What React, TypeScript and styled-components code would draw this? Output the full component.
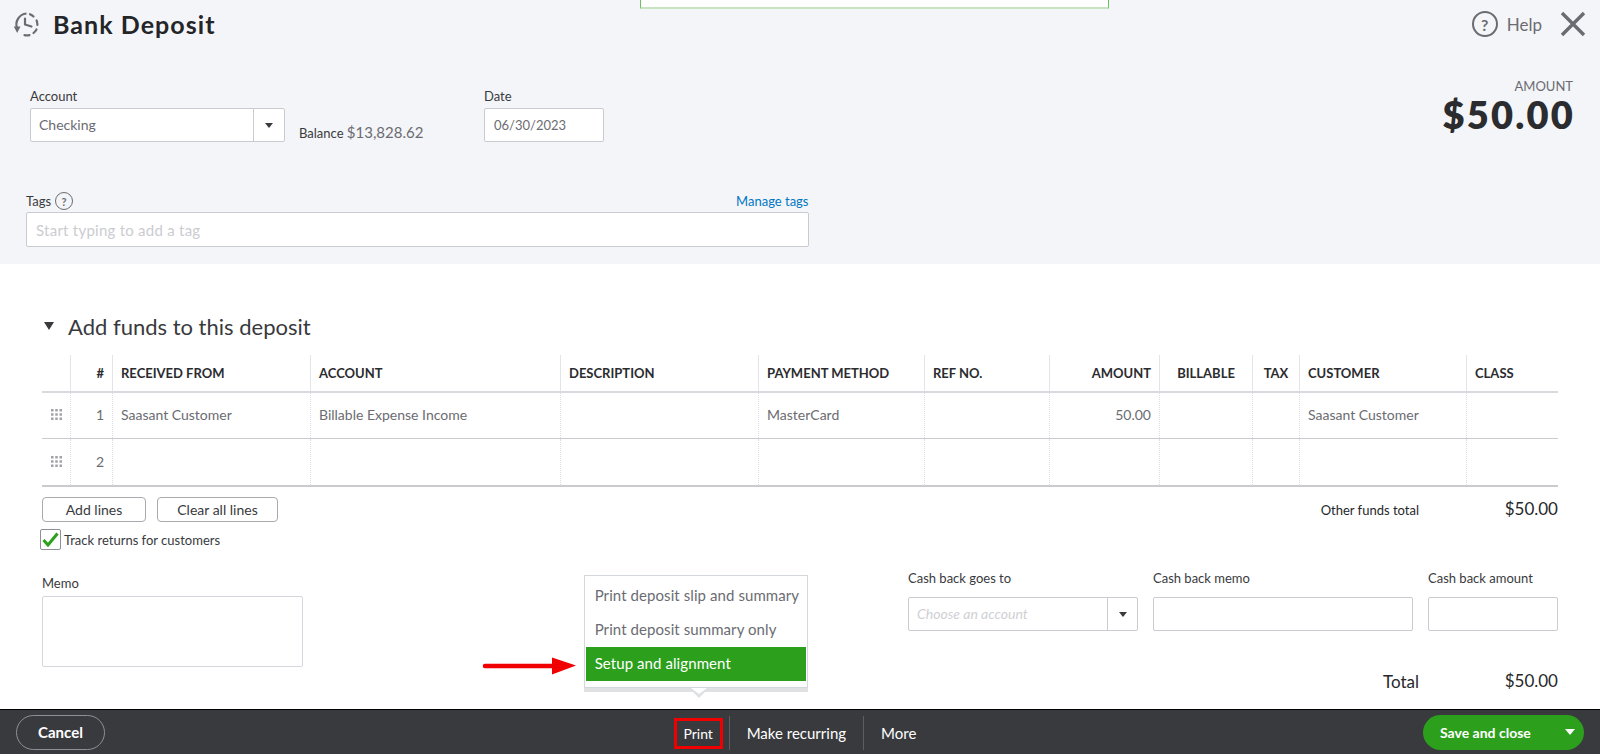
import React from 'react';
import styled, { createGlobalStyle } from 'styled-components';

const FONT = `Lato, "Open Sans", Arial, sans-serif`;
const COLUMNS = '28px 42px 198px 250px 198px 166px 125px 110px 93px 47px 167px 92px';

const GlobalStyle = createGlobalStyle`
  html, body {
    margin: 0;
    padding: 0;
    background: #fff;
  }
  * {
    box-sizing: border-box;
  }
`;

const Page = styled.div`
  position: relative;
  display: flex;
  flex-direction: column;
  width: 1600px;
  height: 754px;
  overflow: hidden;
  font-family: ${FONT};
  color: #393a3d;
`;

/* top grey panel */
const HeaderPanel = styled.section`
  height: 264px;
  flex: none;
  background: #f4f5f8;
  padding: 11px 14px 0 13px;
`;

const NoticeEdge = styled.div`
  position: absolute;
  top: 0;
  left: 640px;
  width: 469px;
  height: 9px;
  background: #fff;
  border: 1px solid #6cbf5f;
  border-top: 0;
  border-bottom: 2px solid #c6e4bf;
`;

const TitleBar = styled.div`
  display: flex;
  align-items: center;
  height: 26px;
`;

const Title = styled.h1`
  margin: 0 0 0 13px;
  font-size: 25px;
  font-weight: 700;
  letter-spacing: 1.05px;
  color: #242528;
`;

const TitleActions = styled.div`
  margin-left: auto;
  display: flex;
  align-items: center;
`;

const HelpLink = styled.span`
  margin: 0 18px 0 9px;
  font-size: 17px;
  color: #6b6c72;
`;

const HelpRound = styled.span<{ $small?: boolean }>`
  display: inline-flex;
  align-items: center;
  justify-content: center;
  width: ${(p) => (p.$small ? 18 : 26)}px;
  height: ${(p) => (p.$small ? 18 : 26)}px;
  border: ${(p) => (p.$small ? 1.5 : 2.5)}px solid #6b6c72;
  border-radius: 50%;
  font-size: ${(p) => (p.$small ? 11 : 16)}px;
  font-weight: 700;
  color: #6b6c72;
`;

const FormRow = styled.div`
  display: flex;
  align-items: flex-start;
  margin: 51px 0 0 17px;
`;

const Field = styled.div<{ $width: number; $gap?: number }>`
  width: ${(p) => p.$width}px;
  margin-left: ${(p) => p.$gap ?? 0}px;
  flex: none;
`;

const Label = styled.label<{ $gap?: number }>`
  display: block;
  height: 16px;
  line-height: 16px;
  margin-bottom: ${(p) => p.$gap ?? 4}px;
  font-size: 13px;
  color: #393a3d;
`;

const Input = styled.div<{ $size?: number; $height?: number }>`
  display: flex;
  align-items: center;
  height: ${(p) => p.$height ?? 34}px;
  padding: 0 9px;
  background: #fff;
  border: 1px solid #c9cbd0;
  border-radius: 2px;
  font-size: ${(p) => p.$size ?? 14}px;
  color: #6b6c72;
`;

const SelectBox = styled.div`
  display: flex;
  height: 34px;
  background: #fff;
  border: 1px solid #c9cbd0;
  border-radius: 2px;
  font-size: 14px;
  color: #6b6c72;
`;

const SelectValue = styled.span<{ $placeholder?: boolean }>`
  flex: 1;
  align-self: center;
  padding-left: 8px;
  padding-bottom: 1px;
  font-style: ${(p) => (p.$placeholder ? 'italic' : 'normal')};
  color: ${(p) => (p.$placeholder ? '#cfd0d4' : '#6b6c72')};
`;

const SelectCaret = styled.span<{ $width: number }>`
  width: ${(p) => p.$width}px;
  display: flex;
  align-items: center;
  justify-content: center;
  border-left: 1px solid #c9cbd0;
  &::after {
    content: '';
    border: 4.5px solid transparent;
    border-top: 5px solid #393a3d;
    border-bottom: 0;
  }
`;

const Balance = styled.div`
  margin: 36px 0 0 14px;
  width: 185px;
  font-size: 13px;
  line-height: 16px;
  span {
    font-size: 15px;
    color: #6b6c72;
  }
`;

const AmountBlock = styled.div`
  margin-left: auto;
  margin-right: 11px;
  margin-top: -10px;
  text-align: right;
`;

const AmountLabel = styled.div`
  font-size: 13px;
  line-height: 16px;
  margin-right: 2px;
  color: #6b6c72;
`;

const AmountValue = styled.div`
  font-size: 38px;
  line-height: 40px;
  font-weight: 800;
  letter-spacing: 2.2px;
  color: #2b2c2f;
`;

const TagsBlock = styled.div`
  width: 782.5px;
  margin: 50px 0 0 13px;
`;

const TagsHead = styled.div`
  display: flex;
  align-items: center;
  height: 18px;
  margin-bottom: 2px;
  font-size: 13px;
  gap: 4px;
`;

const ManageTags = styled.a`
  margin-left: auto;
  font-size: 13px;
  color: #0077c5;
`;

const TagPlaceholder = styled.span`
  letter-spacing: 0.25px;
  color: #cbccd0;
`;

/* white form body */
const Body = styled.main`
  flex: 1;
  padding: 0 42px;
`;

const SectionTitle = styled.h2`
  display: flex;
  align-items: center;
  height: 24px;
  margin: 50px 0 17px 2px;
  font-size: 22px;
  font-weight: 400;
  color: #393a3d;
  &::before {
    content: '';
    margin-right: 14px;
    border: 5.5px solid transparent;
    border-top: 8px solid #393a3d;
    border-bottom: 0;
  }
`;

const Table = styled.div`
  width: 1516px;
`;

const Row = styled.div<{ $head?: boolean; $last?: boolean }>`
  display: grid;
  grid-template-columns: ${COLUMNS};
  height: ${(p) => (p.$head ? 38 : p.$last ? 48 : 46)}px;
  border-bottom: ${(p) => (p.$head || p.$last ? 2 : 1)}px solid
    ${(p) => (p.$head ? '#d8dade' : '#c9cbcf')};
`;

const HeadCell = styled.div<{ $align?: string; $first?: boolean }>`
  display: flex;
  align-items: center;
  justify-content: ${(p) => p.$align ?? 'flex-start'};
  padding: 0 8px;
  border-left: ${(p) => (p.$first ? 0 : 1)}px solid #e3e4e8;
  font-size: 13px;
  font-weight: 700;
  color: #2b2c2f;
`;

const Cell = styled.div<{ $right?: boolean; $first?: boolean }>`
  display: flex;
  align-items: center;
  justify-content: ${(p) => (p.$right ? 'flex-end' : 'flex-start')};
  padding: 0 8px 2px;
  border-left: ${(p) => (p.$first ? 0 : 1)}px dotted #dcdde1;
  font-size: 14px;
  color: #6b6c72;
`;

const Handle = styled.svg`
  width: 11px;
  height: 11px;
  margin-left: 1px;
  flex: none;
  fill: #a0a2a7;
`;

const ActionRow = styled.div`
  display: flex;
  align-items: center;
  gap: 11px;
  margin-top: 10px;
`;

const OutlineButton = styled.button<{ $width: number }>`
  width: ${(p) => p.$width}px;
  height: 25px;
  padding: 0;
  background: #fff;
  border: 1px solid #a8aaae;
  border-radius: 4px;
  font-family: inherit;
  font-size: 14px;
  color: #393a3d;
`;

const SumRow = styled.div<{ $strong?: boolean }>`
  margin-left: auto;
  display: flex;
  justify-content: flex-end;
  align-items: center;
  font-size: ${(p) => (p.$strong ? 17 : 13)}px;
  color: #26272a;
`;

const SumValue = styled.span`
  width: 139px;
  margin-top: -2px;
  text-align: right;
  font-size: 17px;
`;

const CheckRow = styled.div`
  display: flex;
  align-items: center;
  gap: 3px;
  margin: 7px 0 0 -2px;
  font-size: 13px;
  color: #393a3d;
`;

const CheckBox = styled.span`
  display: flex;
  align-items: center;
  justify-content: center;
  width: 21px;
  height: 21px;
  background: #fff;
  border: 1px solid #8d9096;
  border-radius: 2px;
`;

const LowerRow = styled.div`
  display: flex;
  align-items: flex-start;
  margin-top: 20px;
`;

const CashColumn = styled.div`
  margin-left: auto;
  width: 650px;
`;

const CashFields = styled.div`
  display: flex;
  margin-bottom: 40px;
`;

const MemoField = styled.div`
  width: 260.5px;
  padding-top: 5px;
`;

const MemoBox = styled.div`
  height: 71px;
  background: #fff;
  border: 1px solid #d4d7dc;
  border-radius: 2px;
`;

/* bottom bar */
const Footer = styled.footer`
  flex: none;
  height: 45px;
  display: grid;
  grid-template-columns: 1fr auto 1fr;
  align-items: center;
  padding: 0 16px;
  background: #393a3d;
  border-top: 1px solid #000;
  color: #fff;
`;

const CancelButton = styled.button`
  width: 89px;
  height: 35px;
  padding: 0;
  background: transparent;
  border: 1px solid #8d9096;
  border-radius: 18px;
  font-family: inherit;
  font-size: 15px;
  font-weight: 700;
  color: #fff;
`;

const FooterActions = styled.div`
  position: relative;
  display: flex;
  align-items: center;
  height: 35px;
  margin: 2px 0 0 7px;
`;

const FooterLink = styled.span<{ $divider?: boolean }>`
  display: flex;
  align-items: center;
  height: 34px;
  padding: 0 17px;
  border-left: ${(p) => (p.$divider ? '1px solid #5d5e62' : '0')};
  font-size: 15px;
`;

const PrintLink = styled.span`
  display: flex;
  align-items: center;
  justify-content: center;
  width: 49px;
  height: 31px;
  margin-right: 6px;
  border: 3.5px solid #f00000;
  font-size: 14px;
`;

const SaveSplit = styled.div`
  justify-self: end;
  display: flex;
  align-items: center;
  width: 161px;
  height: 35px;
  padding: 0 9px 0 17px;
  background: #2ca01c;
  border-radius: 18px;
  font-size: 14px;
  font-weight: 700;
  span {
    flex: 1;
  }
  &::after {
    content: '';
    border: 5px solid transparent;
    border-top: 6px solid #fff;
    border-bottom: 0;
  }
`;

/* print dropdown over the form */
const PrintMenu = styled.div`
  position: absolute;
  left: -90px;
  bottom: 63px;
  width: 224px;
  height: 113px;
  padding: 3px 1px 0;
  background: #fff;
  border: 1px solid #d4d7dc;
  box-shadow: 0 4px 0 #e0e1e3;
  color: #6b6c72;
  &::before {
    content: '';
    position: absolute;
    left: 104px;
    top: 112px;
    border: 10px solid transparent;
    border-top: 10px solid #dfe0e2;
    border-bottom: 0;
  }
  &::after {
    content: '';
    position: absolute;
    left: 106px;
    top: 112px;
    border: 8px solid transparent;
    border-top: 6px solid #fff;
    border-bottom: 0;
  }
`;

const MenuItem = styled.div<{ $active?: boolean }>`
  display: flex;
  align-items: center;
  height: 34px;
  padding-left: 9px;
  padding-bottom: 1px;
  font-size: 15px;
  letter-spacing: 0.08px;
  background: ${(p) => (p.$active ? '#2ca01c' : 'transparent')};
  color: ${(p) => (p.$active ? '#fff' : '#6b6c72')};
`;

const RedArrow = styled.svg`
  position: absolute;
  left: -103px;
  top: 80px;
`;

const lines = [
  { no: '1', from: 'Saasant Customer', account: 'Billable Expense Income', method: 'MasterCard', amount: '50.00', customer: 'Saasant Customer' },
  { no: '2', from: '', account: '', method: '', amount: '', customer: '' },
];

const HistoryIcon = () => (
  <svg width="27" height="27" viewBox="0 0 27 27" fill="none" stroke="#6b6c72" strokeWidth="2.2">
    <path d="M4.2 17.5A11 11 0 0 1 13.5 2.5" />
    <path d="M17 3.2A11 11 0 0 1 20.5 5.5" strokeLinecap="round" />
    <path d="M23.6 9.5A11 11 0 0 1 24.4 14" strokeLinecap="round" />
    <path d="M23.5 18.5A11 11 0 0 1 20.5 22" strokeLinecap="round" />
    <path d="M16.5 24.1A11 11 0 0 1 11.5 24.2" strokeLinecap="round" />
    <path d="M12 7.5V13.5L18.5 15.5" strokeLinecap="round" strokeLinejoin="round" />
    <path d="M0.8 15.5H7.5L4.2 22Z" fill="#6b6c72" stroke="none" />
  </svg>
);

const CloseIcon = () => (
  <svg width="26" height="26" viewBox="0 0 26 26" fill="none" stroke="#6b6c72" strokeWidth="3.4">
    <path d="M2 2L24 24M24 2L2 24" />
  </svg>
);

const DragHandle = () => (
  <Handle viewBox="0 0 11 11">
    {[0, 4.25, 8.5].map((y) =>
      [0, 4.25, 8.5].map((x) => <rect key={`${x}-${y}`} x={x} y={y} width="2.5" height="2.5" />),
    )}
  </Handle>
);

const App: React.FC = () => {
  return (
    <Page>
      <GlobalStyle />
      <NoticeEdge />
      <HeaderPanel>
        <TitleBar>
          <HistoryIcon />
          <Title>Bank Deposit</Title>
          <TitleActions>
            <HelpRound>?</HelpRound>
            <HelpLink>Help</HelpLink>
            <CloseIcon />
          </TitleActions>
        </TitleBar>
        <FormRow>
          <Field $width={255}>
            <Label>Account</Label>
            <SelectBox>
              <SelectValue>Checking</SelectValue>
              <SelectCaret $width={31} />
            </SelectBox>
          </Field>
          <Balance>
            Balance <span>$13,828.62</span>
          </Balance>
          <Field $width={120}>
            <Label>Date</Label>
            <Input $size={13}>06/30/2023</Input>
          </Field>
          <AmountBlock>
            <AmountLabel>AMOUNT</AmountLabel>
            <AmountValue>$50.00</AmountValue>
          </AmountBlock>
        </FormRow>
        <TagsBlock>
          <TagsHead>
            Tags <HelpRound $small>?</HelpRound>
            <ManageTags>Manage tags</ManageTags>
          </TagsHead>
          <Input $height={35} $size={15}>
            <TagPlaceholder>Start typing to add a tag</TagPlaceholder>
          </Input>
        </TagsBlock>
      </HeaderPanel>

      <Body>
        <SectionTitle>Add funds to this deposit</SectionTitle>
        <Table>
          <Row $head>
            <HeadCell $first />
            <HeadCell $align="flex-end">#</HeadCell>
            <HeadCell>RECEIVED FROM</HeadCell>
            <HeadCell>ACCOUNT</HeadCell>
            <HeadCell>DESCRIPTION</HeadCell>
            <HeadCell>PAYMENT METHOD</HeadCell>
            <HeadCell>REF NO.</HeadCell>
            <HeadCell $align="flex-end">AMOUNT</HeadCell>
            <HeadCell $align="center">BILLABLE</HeadCell>
            <HeadCell $align="center">TAX</HeadCell>
            <HeadCell>CUSTOMER</HeadCell>
            <HeadCell>CLASS</HeadCell>
          </Row>
          {lines.map((line, i) => (
            <Row key={line.no} $last={i === lines.length - 1}>
              <Cell $first>
                <DragHandle />
              </Cell>
              <Cell $right>{line.no}</Cell>
              <Cell>{line.from}</Cell>
              <Cell>{line.account}</Cell>
              <Cell />
              <Cell>{line.method}</Cell>
              <Cell />
              <Cell $right>{line.amount}</Cell>
              <Cell />
              <Cell />
              <Cell>{line.customer}</Cell>
              <Cell />
            </Row>
          ))}
        </Table>

        <ActionRow>
          <OutlineButton $width={104}>Add lines</OutlineButton>
          <OutlineButton $width={121}>Clear all lines</OutlineButton>
          <SumRow>
            Other funds total
            <SumValue>$50.00</SumValue>
          </SumRow>
        </ActionRow>
        <CheckRow>
          <CheckBox>
            <svg width="17" height="15" viewBox="0 0 17 15" fill="none" stroke="#2ca01c" strokeWidth="3">
              <path d="M1.5 8L6 13L15.5 1.5" />
            </svg>
          </CheckBox>
          Track returns for customers
        </CheckRow>

        <LowerRow>
          <MemoField>
            <Label $gap={5}>Memo</Label>
            <MemoBox />
          </MemoField>
          <CashColumn>
            <CashFields>
              <Field $width={230}>
                <Label $gap={11}>Cash back goes to</Label>
                <SelectBox>
                  <SelectValue $placeholder>Choose an account</SelectValue>
                  <SelectCaret $width={30} />
                </SelectBox>
              </Field>
              <Field $width={260} $gap={15}>
                <Label $gap={11}>Cash back memo</Label>
                <Input />
              </Field>
              <Field $width={130} $gap={15}>
                <Label $gap={11}>Cash back amount</Label>
                <Input />
              </Field>
            </CashFields>
            <SumRow $strong>
              Total
              <SumValue>$50.00</SumValue>
            </SumRow>
          </CashColumn>
        </LowerRow>
      </Body>

      <Footer>
        <CancelButton>Cancel</CancelButton>
        <FooterActions>
          <PrintMenu>
            <RedArrow width="96" height="20" viewBox="0 0 96 20">
              <path d="M3 10H72" stroke="#f00000" strokeWidth="4.5" strokeLinecap="round" />
              <path d="M70 1.5L94 9.5L70 18.5Z" fill="#f00000" />
            </RedArrow>
            <MenuItem>Print deposit slip and summary</MenuItem>
            <MenuItem>Print deposit summary only</MenuItem>
            <MenuItem $active>Setup and alignment</MenuItem>
          </PrintMenu>
          <PrintLink>Print</PrintLink>
          <FooterLink $divider>Make recurring</FooterLink>
          <FooterLink $divider>More</FooterLink>
        </FooterActions>
        <SaveSplit>
          <span>Save and close</span>
        </SaveSplit>
      </Footer>
    </Page>
  );
};

export default App;
